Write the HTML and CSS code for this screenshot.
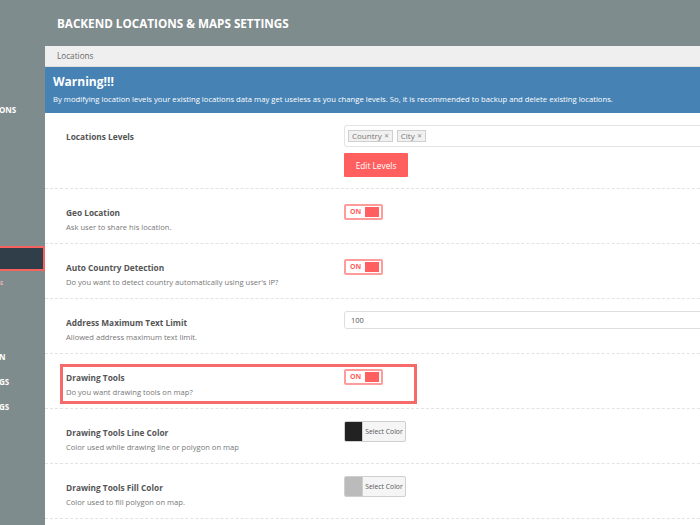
FILE: index.html
```html
<!DOCTYPE html>
<html>
<head>
<meta charset="utf-8">
<link rel="stylesheet" href="styles.css">
</head>
<body>
<div class="app">
  <aside class="sidebar">
    <div class="nav-item">ONS</div>
    <div class="nav-item"></div>
    <div class="nav-item"></div>
    <div class="nav-item"></div>
    <div class="nav-item"></div>
    <div class="nav-item"></div>
    <div class="nav-item active"></div>
    <div class="nav-item faint">E</div>
    <div class="nav-item"></div>
    <div class="nav-item"></div>
    <div class="nav-item">N</div>
    <div class="nav-item">GS</div>
    <div class="nav-item">GS</div>
  </aside>
  <main class="main">
    <header class="page-title">BACKEND LOCATIONS &amp; MAPS SETTINGS</header>
    <section class="panel">
      <div class="crumb">Locations</div>
      <div class="warning">
        <h2 class="warning-title">Warning!!!</h2>
        <p class="warning-text">By modifying location levels your existing locations data may get useless as you change levels. So, it is recommended to backup and delete existing locations.</p>
      </div>

      <div class="row row-first">
        <div class="info">
          <div class="label">Locations Levels</div>
        </div>
        <div class="control control-top">
          <div class="tags-input">
            <span class="tag">Country <span class="x">✕</span></span>
            <span class="tag">City <span class="x">✕</span></span>
          </div>
          <button class="btn-red">Edit Levels</button>
        </div>
      </div>

      <div class="row">
        <div class="info">
          <div class="label">Geo Location</div>
          <div class="desc">Ask user to share his location.</div>
        </div>
        <div class="control control-toggle">
          <span class="toggle"><span class="toggle-text">ON</span><span class="toggle-knob"></span></span>
        </div>
      </div>

      <div class="row">
        <div class="info">
          <div class="label">Auto Country Detection</div>
          <div class="desc">Do you want to detect country automatically using user's IP?</div>
        </div>
        <div class="control control-toggle">
          <span class="toggle"><span class="toggle-text">ON</span><span class="toggle-knob"></span></span>
        </div>
      </div>

      <div class="row">
        <div class="info">
          <div class="label">Address Maximum Text Limit</div>
          <div class="desc">Allowed address maximum text limit.</div>
        </div>
        <div class="control control-top">
          <div class="text-input">100</div>
        </div>
      </div>

      <div class="row row-highlight">
        <div class="highlight"></div>
        <div class="info">
          <div class="label">Drawing Tools</div>
          <div class="desc">Do you want drawing tools on map?</div>
        </div>
        <div class="control control-toggle">
          <span class="toggle"><span class="toggle-text">ON</span><span class="toggle-knob"></span></span>
        </div>
      </div>

      <div class="row">
        <div class="info">
          <div class="label">Drawing Tools Line Color</div>
          <div class="desc">Color used while drawing line or polygon on map</div>
        </div>
        <div class="control control-top">
          <div class="picker"><span class="swatch swatch-dark"></span><span class="picker-text">Select Color</span></div>
        </div>
      </div>

      <div class="row">
        <div class="info">
          <div class="label">Drawing Tools Fill Color</div>
          <div class="desc">Color used to fill polygon on map.</div>
        </div>
        <div class="control control-top">
          <div class="picker"><span class="swatch swatch-light"></span><span class="picker-text">Select Color</span></div>
        </div>
      </div>
    </section>
  </main>
</div>
</body>
</html>
```

FILE: styles.css
```css
* { box-sizing: border-box; }
html, body {
  margin: 0;
  padding: 0;
  width: 700px;
  height: 525px;
  overflow: hidden;
  background: #7f8c8d;
  font-family: "Open Sans", "Noto Sans", sans-serif;
}
.app {
  display: flex;
  width: 700px;
  height: 525px;
  overflow: hidden;
}
.sidebar {
  width: 45px;
  flex-shrink: 0;
  padding-top: 97.6px;
  position: relative;
  z-index: 2;
}
.nav-item {
  height: 24.75px;
  line-height: 24.75px;
  color: #fff;
  font-weight: 700;
  font-size: 8px;
  white-space: nowrap;
  margin-left: -1px;
}
.nav-item.faint { color: #e9b0b0; font-size: 6px; margin-left: 0; }
.nav-item.active {
  background: #2f3e48;
  border: 2px solid #f5625f;
  width: 47px;
  height: 25px;
  margin-left: -2px;
}
.main {
  flex: 1;
  min-width: 0;
  display: flex;
  flex-direction: column;
}
.page-title {
  height: 46px;
  line-height: 46px;
  padding-left: 12px;
  color: #fff;
  font-weight: 700;
  font-size: 11.7px;
}
.panel {
  width: 700px;
  flex: 1;
  background: #fff;
}
.crumb {
  height: 21px;
  line-height: 20px;
  background: #efefef;
  border-bottom: 1px solid #dcdcdc;
  padding-left: 12px;
  font-size: 8.2px;
  color: #6a6a6a;
}
.warning {
  height: 46px;
  background: #4682b4;
  color: #fff;
  padding: 7px 8px 0;
}
.warning-title {
  margin: 0;
  font-size: 12px;
  font-weight: 700;
  line-height: 16px;
}
.warning-text {
  margin: 3px 0 0;
  font-size: 7.7px;
  line-height: 12px;
  white-space: nowrap;
}
.row {
  display: grid;
  grid-template-columns: 278px 1fr;
  height: 55px;
  padding-left: 21px;
  border-bottom: 1px dashed #e3e3e3;
  position: relative;
}
.row-first { height: 76px; }
.info { padding-top: 17px; }
.label {
  font-size: 8.3px;
  font-weight: 700;
  color: #555;
  line-height: 14px;
}
.desc {
  font-size: 7.6px;
  color: #777;
  line-height: 14px;
}
.control-top { padding-top: 12px; }
.control-toggle {
  padding-top: 15px;
  display: flex;
  align-items: flex-start;
}
.tags-input {
  height: 22px;
  border: 1px solid #e3e3e3;
  border-radius: 3px;
  padding: 4px 3px;
  display: flex;
  gap: 4px;
  align-items: flex-start;
}
.tag {
  display: inline-flex;
  align-items: center;
  height: 12px;
  padding: 0 3px;
  background: #f1f1f1;
  border: 1px solid #cfcfcf;
  font-size: 8px;
  color: #777;
  line-height: 10px;
}
.x { font-size: 6px; margin-left: 2px; color: #888; }
.btn-red {
  display: block;
  margin-top: 6px;
  width: 64px;
  height: 24px;
  border: none;
  background: #ff5f5f;
  color: #fff;
  font-family: inherit;
  font-size: 8.3px;
  padding: 0;
  border-radius: 1px;
}
.toggle {
  display: flex;
  align-items: center;
  justify-content: space-between;
  width: 39px;
  height: 16px;
  border: 2px solid #ff9b9b;
  border-radius: 2px;
  padding: 0 2px 0 4px;
  background: #fff;
}
.toggle-text {
  font-size: 7px;
  font-weight: 700;
  color: #ff5f5f;
  line-height: 10px;
}
.toggle-knob {
  width: 14px;
  height: 10px;
  background: #ff5f5f;
}
.text-input {
  height: 18px;
  border: 1px solid #dedede;
  border-radius: 3px;
  padding-left: 6px;
  font-size: 7.5px;
  line-height: 16px;
  color: #555;
}
.picker {
  display: flex;
  width: 62px;
  height: 21px;
  border: 1px solid #cfcfcf;
  border-radius: 2px;
  background: #f5f5f5;
  overflow: hidden;
}
.swatch { width: 18px; height: 100%; border-right: 1px solid #cfcfcf; }
.swatch-dark { background: #222; }
.swatch-light { background: #bbb; }
.picker-text {
  flex: 1;
  text-align: center;
  font-size: 6.8px;
  line-height: 19px;
  color: #555;
}
.highlight {
  position: absolute;
  left: 15px;
  top: 10px;
  width: 357px;
  height: 40px;
  border: 3px solid #f56b6b;
  pointer-events: none;
}
```
